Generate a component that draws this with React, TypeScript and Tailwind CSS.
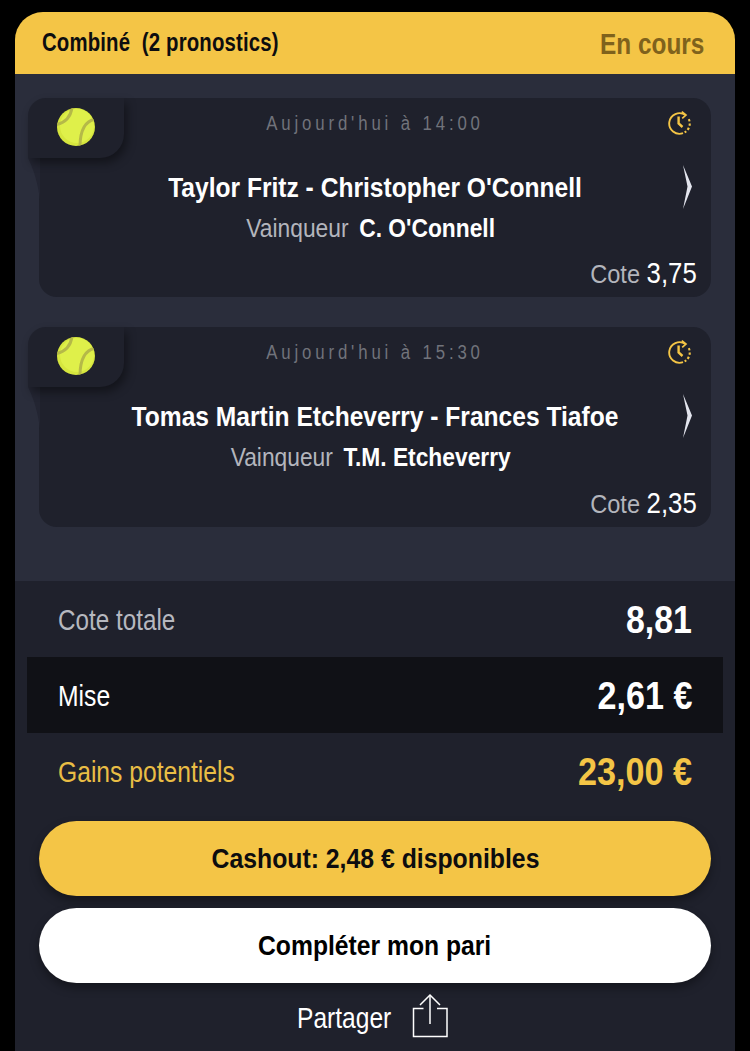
const font = { fontFamily: '"Liberation Sans",Arial,sans-serif' };

function Ball() {
  return (
    <svg width="38" height="38" viewBox="0 0 38 38" className="block">
      <defs>
        <clipPath id="ballclip"><circle cx="19" cy="19" r="19" /></clipPath>
      </defs>
      <circle cx="19" cy="19" r="19" fill="#d6e63e" />
      <g clipPath="url(#ballclip)">
        <circle cx="20" cy="18" r="17" fill="#dff04a" />
        <path d="M15 -1C14 9 8 15 -2 17" stroke="#b5b948" strokeWidth="3" fill="none" />
        <path d="M40 11C29 12 23 20 23 39" stroke="#b5b948" strokeWidth="3" fill="none" />
      </g>
    </svg>
  );
}

function Clock() {
  return (
    <svg width="26" height="26" viewBox="0 0 26 26" fill="none" stroke="#f4c546" strokeWidth="1.9" className="block">
      <path d="M18.4 5.06A10.3 10.3 0 1 0 16 23.2" />
      <path d="M14.8 1.6L19 5.1L15.2 8.4" strokeWidth="1.7" />
      <path d="M21.8 9.15A10.3 10.3 0 0 1 17.65 22.4" strokeDasharray="2.4 2" strokeWidth="2.1" />
      <path d="M11.6 6.5V13.5L15.5 17" strokeWidth="2.4" />
    </svg>
  );
}

function Chevron() {
  return (
    <svg width="11" height="44" viewBox="0 0 11 44" className="block">
      <path d="M1 0L10 21.5L1 44L5.5 21.5Z" fill="#e3e5ee" />
    </svg>
  );
}

function Share() {
  return (
    <svg width="36" height="46" viewBox="0 0 36 46" fill="none" stroke="#fff" strokeWidth="1.5" className="block">
      <path d="M11.5 15.5H1.5V43.5H35V15.5H25" />
      <path d="M18 2V31" />
      <path d="M8 12L18 2L28 12" />
    </svg>
  );
}

function Card({ time, match, pick, odd, outer }: { time: string; match: string; pick: string; odd: string; outer: string }) {
  return (
    <div className={`relative mx-6 rounded-[18px] bg-[#1f212c] ${outer}`}>
      <svg width="12" height="42" viewBox="0 0 12 42" className="absolute left-[-11px] top-[60px]">
        <path d="M0 0H12V42C10 26 6 12 0 0Z" fill="#232532" />
      </svg>
      <div className="absolute left-[-11px] top-0 flex h-[60px] w-[96px] items-center justify-center rounded-tl-[18px] rounded-br-[24px] bg-[#1f212c] shadow-[3px_5px_10px_rgba(0,0,0,0.4)]">
        <div className="ml-[-1px] mt-[-2px]"><Ball /></div>
      </div>
      <div className="absolute right-[18px] top-[12px]"><Clock /></div>
      <div className="absolute right-[18px] top-[67px]"><Chevron /></div>
      <div className="scale-x-[0.84] pt-[12px] text-center text-[20px] leading-[26px] tracking-[4.6px] whitespace-nowrap text-[#71737b]">{time}</div>
      <div className="mt-[32px] scale-x-[0.8625] text-center text-[28.5px] font-bold leading-[38px] whitespace-nowrap text-white">{match}</div>
      <div className="mt-[3px] scale-x-[0.86] pr-[10px] text-center text-[26.5px] leading-[38px] whitespace-nowrap text-[#b3b5bc]">
        Vainqueur <span className="ml-[5px] font-bold text-white">{pick}</span>
      </div>
      <div className="absolute bottom-[4px] right-[14px] origin-right scale-x-[0.89] text-[26.5px] leading-[38px] whitespace-nowrap text-[#b3b5bc]">
        Cote <span className="text-[29px] text-white">{odd}</span>
      </div>
    </div>
  );
}

export default function App() {
  return (
    <div className="h-[1051px] w-[750px] overflow-hidden bg-black pt-3" style={font}>
      <div className="mx-[15px] w-[720px]">
        <div className="flex h-[62px] items-center justify-between rounded-t-[28px] bg-[#f4c546] pl-[27px] pr-[31px]">
          <span className="origin-left scale-x-[0.814] text-[25px] font-bold tracking-[0.2px] whitespace-pre text-[#0d0d0f]">Combiné  (2 pronostics)</span>
          <span className="origin-right scale-x-[0.8125] text-[30px] font-bold text-[#7f621c]">En cours</span>
        </div>
        <div className="h-[507px] bg-[#2a2d3b] pt-6">
          <Card time="Aujourd'hui à 14:00" match="Taylor Fritz - Christopher O'Connell" pick="C. O'Connell" odd="3,75" outer="h-[199px]" />
          <Card time="Aujourd'hui à 15:30" match="Tomas Martin Etcheverry - Frances Tiafoe" pick="T.M. Etcheverry" odd="2,35" outer="mt-[30px] h-[200px]" />
        </div>
        <div className="h-[470px] bg-[#1f212c] px-3">
          <div className="flex h-[76px] items-center justify-between px-[31px] pt-[2px] text-[29px] text-[#b6b8bf]">
            <span className="mt-[2px] origin-left scale-x-[0.836]">Cote totale</span>
            <span className="origin-right scale-x-[0.868] text-[39px] font-bold text-white">8,81</span>
          </div>
          <div className="flex h-[76px] items-center justify-between bg-[#101116] px-[31px] pt-[2px] text-[29px] text-white">
            <span className="mt-[2px] origin-left scale-x-[0.852]">Mise</span>
            <span className="origin-right scale-x-[0.875] text-[39px] font-bold">2,61 €</span>
          </div>
          <div className="flex h-[76px] items-center justify-between px-[31px] pt-[2px] text-[29px] text-[#e9bd45]">
            <span className="mt-[2px] origin-left scale-x-[0.85]">Gains potentiels</span>
            <span className="origin-right scale-x-[0.877] text-[39px] font-bold text-[#f4c546]">23,00 €</span>
          </div>
          <div className="mx-3 mt-3 flex h-[75px] items-center justify-center rounded-full bg-[#f4c546] text-[28.5px] font-bold text-[#0d0d0f] shadow-[0_5px_10px_rgba(0,0,0,0.35)]">
            <span className="scale-x-[0.87]">Cashout: 2,48 € disponibles</span>
          </div>
          <div className="mx-3 mt-3 flex h-[75px] items-center justify-center rounded-full bg-white text-[28.5px] font-bold text-black shadow-[0_5px_10px_rgba(0,0,0,0.35)]">
            <span className="scale-x-[0.866]">Compléter mon pari</span>
          </div>
          <div className="mt-[8px] ml-[-1px] flex items-center justify-center gap-[20px] pr-[21px] text-[29px] text-white">
            <span className="origin-right scale-x-[0.847] pt-[6px]">Partager</span>
            <Share />
          </div>
        </div>
      </div>
    </div>
  );
}
